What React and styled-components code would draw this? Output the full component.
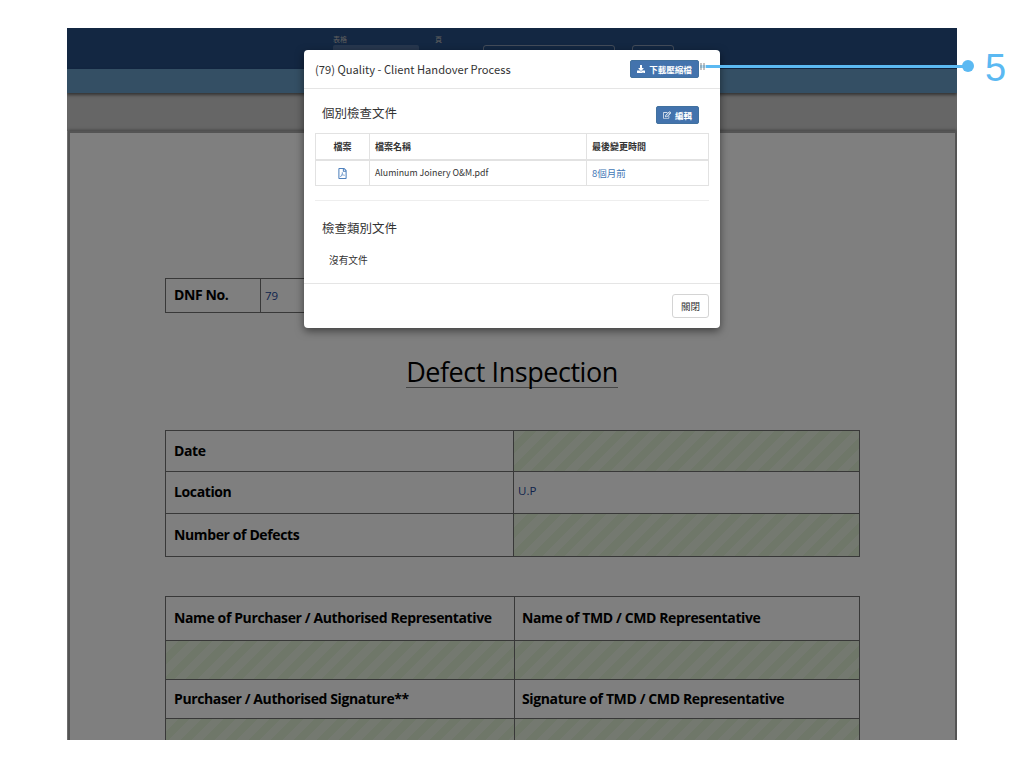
import React from 'react';
import styled, { createGlobalStyle } from 'styled-components';
import { FaDownload, FaRegEdit, FaRegFilePdf } from 'react-icons/fa';

const GlobalStyle = createGlobalStyle`
  html, body {
    margin: 0;
    padding: 0;
    background: #fff;
  }
  * {
    box-sizing: border-box;
  }
`;

const Page = styled.div`
  position: relative;
  width: 1024px;
  height: 768px;
  padding: 28px 67px 28px;
  background: #fff;
  overflow: hidden;
  font-family: "Noto Sans CJK TC", "Noto Sans", sans-serif;
`;

const Screen = styled.div`
  position: relative;
  width: 890px;
  height: 712px;
  display: flex;
  flex-direction: column;
  overflow: hidden;
`;

const TopBar = styled.div`
  height: 41px;
  flex: none;
  display: flex;
  align-items: flex-start;
  padding: 6px 0 0 266px;
  background: #264e84;
  color: #bbb;
`;

const Field = styled.div`
  width: ${({ $width }) => $width}px;
  margin-right: ${({ $gap }) => $gap}px;
  font-size: 7px;
  line-height: 10px;
`;

const FakeSelect = styled.div`
  height: 20px;
  margin-top: 1px;
  background: #4f6f9c;
  border-radius: 2px;
`;

const TopButton = styled.div`
  width: ${({ $width }) => $width}px;
  height: 20px;
  margin: 11px ${({ $gap }) => $gap}px 0 0;
  border: 1px solid #8899b2;
  border-radius: 3px;
`;

const SubBar = styled.div`
  height: 24px;
  flex: none;
  background: #689ec8;
  box-shadow: 0 2px 3px rgba(0, 0, 0, 0.5);
  position: relative;
`;

const Band = styled.div`
  height: 38px;
  flex: none;
  background: #cccccc;
`;

const Paper = styled.div`
  flex: 1;
  margin: 0 0 0 1px;
  padding: 145px 96px 0 95px;
  background: #fff;
  border: 2px solid #a8a8a8;
  border-bottom: 0;
  box-shadow: 0 -1px 3px rgba(0, 0, 0, 0.35);
  color: #000;
  font-family: "Open Sans", "Noto Sans", sans-serif;
`;

const DnfTable = styled.div`
  display: grid;
  grid-template-columns: 94px 200px;
  width: 295px;
  height: 35px;
  border: 1px solid #707070;
`;

const Cell = styled.div`
  display: flex;
  align-items: center;
  padding: 0 0 2px ${({ $indent }) => $indent || 8}px;
  font-size: 14px;
  font-weight: 700;
  letter-spacing: -0.38px;
  color: #000;
  border-left: ${({ $first }) => ($first ? '0' : '1px solid #707070')};
  border-top: ${({ $top }) => ($top ? '0' : '1px solid #707070')};
  background: ${({ $hatch }) =>
    $hatch
      ? 'repeating-linear-gradient(-45deg, #dfeed2 0 8px, #e9f2e0 8px 16px)'
      : 'transparent'};
`;

const ValueCell = styled.div`
  padding: ${({ $pad }) => $pad}px 0 0 4px;
  font-size: 11.5px;
  color: #24489a;
  border-left: 1px solid #707070;
  border-top: ${({ $top }) => ($top ? '0' : '1px solid #707070')};
`;

const DocTitleRow = styled.div`
  display: flex;
  justify-content: center;
  margin: 42px 0 42px;
`;

const DocTitle = styled.h1`
  margin: 0;
  height: 33px;
  border-bottom: 1px solid #8a8a8a;
  font-family: "Open Sans", sans-serif;
  font-size: 27px;
  line-height: 34px;
  font-weight: 400;
  letter-spacing: -0.45px;
  color: #000;
`;

const FormTable = styled.div`
  display: grid;
  grid-template-columns: ${({ $split }) => $split}px 1fr;
  grid-template-rows: ${({ $rows }) => $rows};
  width: 695px;
  margin-bottom: ${({ $bottom }) => $bottom || 0}px;
  border: 1px solid #707070;
`;

const Backdrop = styled.div`
  position: absolute;
  inset: 0;
  background: rgba(0, 0, 0, 0.5);
`;

const Modal = styled.div`
  position: absolute;
  top: 22px;
  left: 237px;
  width: 416px;
  height: 278px;
  display: flex;
  flex-direction: column;
  background: #fff;
  border-radius: 4px;
  box-shadow: 0 3px 9px rgba(0, 0, 0, 0.5);
  color: #333;
`;

const ModalHeader = styled.div`
  height: 39px;
  flex: none;
  display: flex;
  align-items: center;
  justify-content: space-between;
  padding: 0 21px 1px 11px;
  border-bottom: 1px solid #e5e5e5;
`;

const ModalTitle = styled.div`
  font-size: 11.16px;
  line-height: 16px;
`;

const ModalBody = styled.div`
  flex: 1;
  padding: 17px 11px 0;
`;

const SectionHead = styled.div`
  display: flex;
  align-items: center;
  justify-content: space-between;
  height: 18px;
  padding: 0 10px 0 7px;
  margin-bottom: ${({ $bottom }) => $bottom}px;
`;

const SectionTitle = styled.h4`
  margin: 0 0 4px;
  font-size: 12.5px;
  line-height: 16px;
  font-weight: 400;
  color: #333;
`;

const PrimaryButton = styled.button`
  display: inline-flex;
  align-items: center;
  justify-content: center;
  gap: 4px;
  width: ${({ $width }) => $width}px;
  height: 18px;
  padding: 0;
  border: 1px solid #41719f;
  border-radius: 2px;
  background: #4373ad;
  color: #fff;
  font-family: inherit;
  font-size: 8.5px;
  font-weight: 700;
  svg {
    font-size: 8px;
  }
`;

const FileTable = styled.table`
  width: 393px;
  border-collapse: collapse;
  table-layout: fixed;
  font-size: 8.8px;
  th, td {
    border: 1px solid #e2e2e2;
    padding: 0 5px;
    text-align: left;
  }
  th {
    height: 26px;
    font-size: 9px;
    font-weight: 700;
    border-bottom-width: 2px;
  }
  td {
    height: 26px;
  }
`;

const CenterCol = styled.th`
  && {
    text-align: center;
  }
`;

const IconCell = styled.td`
  && {
    text-align: center;
    color: #4f81bd;
    font-size: 11px;
    padding-top: 2px;
  }
`;

const LinkCell = styled.td`
  color: #3f76b5;
  font-size: 9.5px;
`;

const Divider = styled.hr`
  height: 1px;
  margin: 14px 0 20px;
  border: 0;
  background: #eee;
`;

const EmptyText = styled.div`
  padding-left: 14px;
  font-size: 9.7px;
  line-height: 14px;
  color: #333;
`;

const ModalFooter = styled.div`
  height: 45px;
  flex: none;
  display: flex;
  justify-content: flex-end;
  align-items: flex-start;
  padding: 10px 11px 0 0;
  border-top: 1px solid #e5e5e5;
`;

const CloseButton = styled.button`
  width: 37px;
  height: 24px;
  padding: 0;
  border: 1px solid #d4d4d4;
  border-radius: 3px;
  background: #fff;
  color: #333;
  font-family: inherit;
  font-size: 9.5px;
`;

const CalloutLine = styled.div`
  position: absolute;
  top: 65px;
  left: 700px;
  width: 268px;
  height: 3px;
  background: #5bb9f2;
  &::before {
    content: '';
    position: absolute;
    left: 0;
    top: -2px;
    width: 6px;
    height: 7px;
    background: repeating-linear-gradient(90deg, rgba(170, 170, 170, 0.7) 0 2px, rgba(255, 255, 255, 0.6) 2px 3px);
  }
`;

const CalloutDot = styled.div`
  position: absolute;
  top: 60px;
  left: 962px;
  width: 12px;
  height: 12px;
  border-radius: 50%;
  background: #5bb9f2;
`;

const CalloutNumber = styled.div`
  position: absolute;
  top: 46px;
  left: 985px;
  font-family: "Liberation Sans", Arial, sans-serif;
  font-size: 38px;
  line-height: 44px;
  color: #5bb9f2;
`;

export default function App() {
  return (
    <>
      <GlobalStyle />
      <Page>
        <Screen>
          <TopBar>
            <Field $width={86} $gap={16}>
              表格
              <FakeSelect />
            </Field>
            <Field $width={48} $gap={0}>頁</Field>
            <TopButton $width={132} $gap={17} />
            <TopButton $width={42} $gap={0} />
          </TopBar>
          <SubBar />
          <Band />
          <Paper>
            <DnfTable>
              <Cell $top $first>DNF No.</Cell>
              <ValueCell $top $pad={9}>79</ValueCell>
            </DnfTable>
            <DocTitleRow>
              <DocTitle>Defect Inspection</DocTitle>
            </DocTitleRow>
            <FormTable $split={347} $rows="40px 42px 43px" $bottom={39}>
              <Cell $top $first>Date</Cell>
              <Cell $top $hatch />
              <Cell $first>Location</Cell>
              <ValueCell $pad={11}>U.P</ValueCell>
              <Cell $first>Number of Defects</Cell>
              <Cell $hatch />
            </FormTable>
            <FormTable $split={348} $rows="43px 39px 39px 39px">
              <Cell $top $first>Name of Purchaser / Authorised Representative</Cell>
              <Cell $top $indent={7}>Name of TMD / CMD Representative</Cell>
              <Cell $first $hatch />
              <Cell $hatch />
              <Cell $first>Purchaser / Authorised Signature**</Cell>
              <Cell $indent={7}>Signature of TMD / CMD Representative</Cell>
              <Cell $first $hatch />
              <Cell $hatch />
            </FormTable>
          </Paper>
          <Backdrop />
          <Modal>
            <ModalHeader>
              <ModalTitle>(79) Quality - Client Handover Process</ModalTitle>
              <PrimaryButton $width={69}>
                <FaDownload />
                下載壓縮檔
              </PrimaryButton>
            </ModalHeader>
            <ModalBody>
              <SectionHead $bottom={9}>
                <SectionTitle>個別檢查文件</SectionTitle>
                <PrimaryButton $width={43}>
                  <FaRegEdit />
                  編輯
                </PrimaryButton>
              </SectionHead>
              <FileTable>
                <colgroup>
                  <col width="54" />
                  <col width="217" />
                  <col width="122" />
                </colgroup>
                <thead>
                  <tr>
                    <CenterCol>檔案</CenterCol>
                    <th>檔案名稱</th>
                    <th>最後變更時間</th>
                  </tr>
                </thead>
                <tbody>
                  <tr>
                    <IconCell><FaRegFilePdf /></IconCell>
                    <td>Aluminum Joinery O&amp;M.pdf</td>
                    <LinkCell>8個月前</LinkCell>
                  </tr>
                </tbody>
              </FileTable>
              <Divider />
              <SectionHead $bottom={14}>
                <SectionTitle>檢查類別文件</SectionTitle>
              </SectionHead>
              <EmptyText>沒有文件</EmptyText>
            </ModalBody>
            <ModalFooter>
              <CloseButton>關閉</CloseButton>
            </ModalFooter>
          </Modal>
        </Screen>
        <CalloutLine />
        <CalloutDot />
        <CalloutNumber>5</CalloutNumber>
      </Page>
    </>
  );
}
